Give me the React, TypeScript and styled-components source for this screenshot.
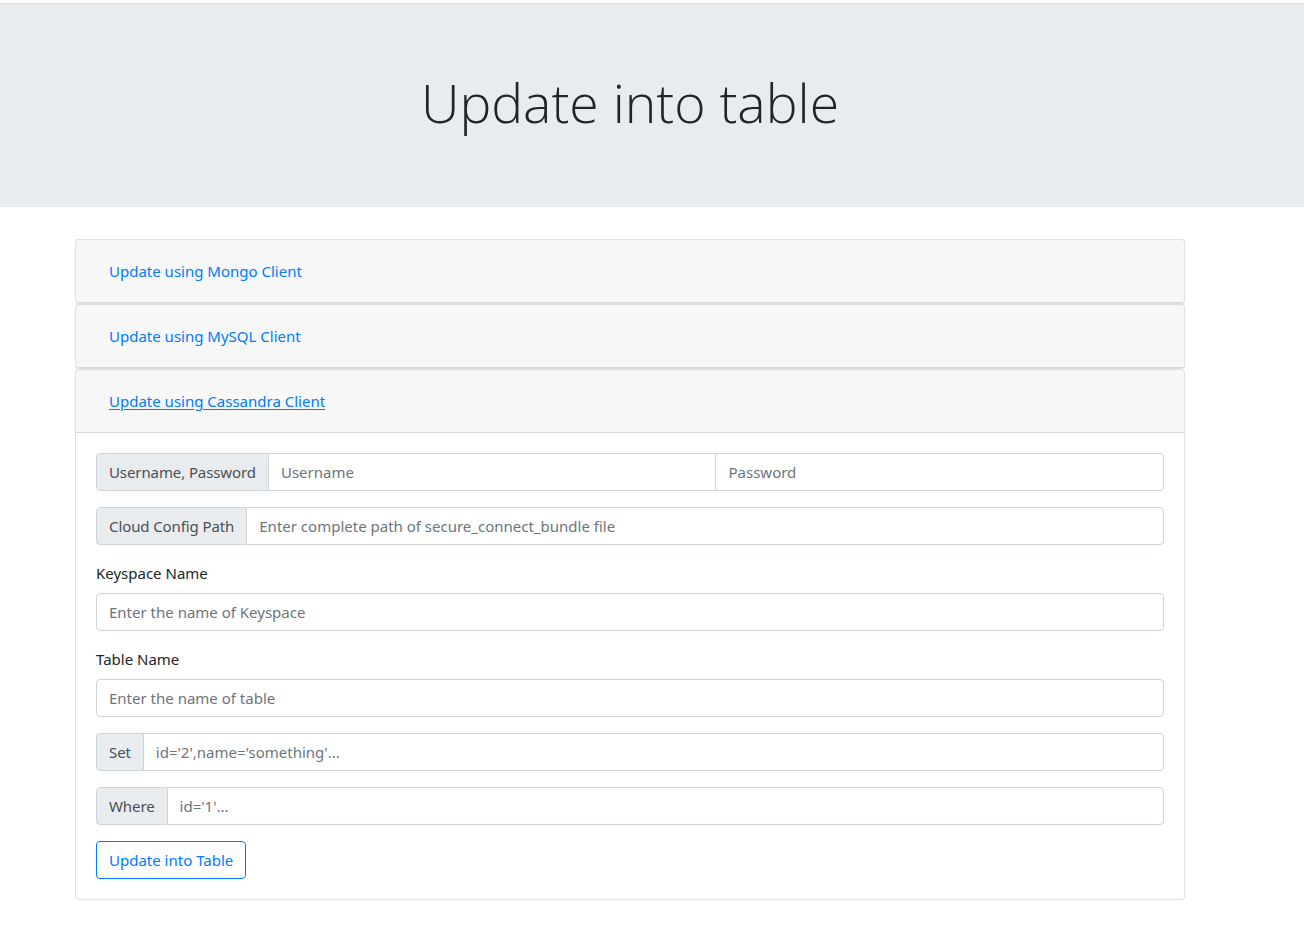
import React from "react";
import styled, { createGlobalStyle } from "styled-components";

const Global = createGlobalStyle`
  html, body { margin: 0; padding: 0; background: #fff; }
  body {
    font-family: "Noto Sans", "Open Sans", "Liberation Sans", sans-serif;
    font-size: 16px;
    line-height: 1.5;
    color: #212529;
  }
  * { box-sizing: border-box; }
  input::placeholder { color: #6c757d; opacity: 1; }
`;

const Page = styled.div`
  padding-top: 3px;
`;

const Jumbotron = styled.header`
  background: #e9ecef;
  border-top: 1px solid #d6d8da;
  padding: 65px 32px 63px;
  margin-bottom: 32px;
  text-align: center;
`;

const Title = styled.h1`
  margin: 0 0 8px;
  padding-right: 44px;
  font-family: "Open Sans", "Noto Sans", sans-serif;
  font-size: 53.5px;
  font-weight: 300;
  line-height: 67px;
  color: #212529;
`;

const Viewport = styled.div`
  width: 1260px;
`;

const Container = styled.main`
  width: 1110px;
  margin: 0 auto;
  padding-bottom: 36px;
`;

const Card = styled.section`
  border: 1px solid rgba(0, 0, 0, 0.125);
  border-radius: 4px;
  background: #fff;
  overflow: hidden;
`;

const CardHeader = styled.div`
  background: rgba(0, 0, 0, 0.03);
  border-bottom: 1px solid rgba(0, 0, 0, 0.125);
  padding: 12px 20px;
`;

const LinkButton = styled.button<{ $active?: boolean }>`
  font: inherit;
  font-size: 15px;
  line-height: 24px;
  background: none;
  border: 1px solid transparent;
  padding: 6px 12px;
  color: #007bff;
  cursor: pointer;
  text-decoration: ${(p) => (p.$active ? "underline" : "none")};
  text-underline-offset: 2px;
`;

const CardBody = styled.div`
  padding: 20px;
`;

const InputGroup = styled.div`
  display: flex;
  margin-bottom: 16px;
`;

const GroupText = styled.span`
  display: flex;
  align-items: center;
  padding: 6px 12px;
  font-size: 15px;
  line-height: 24px;
  letter-spacing: -0.1px;
  color: #495057;
  background: #e9ecef;
  border: 1px solid #ced4da;
  border-radius: 4px 0 0 4px;
  white-space: nowrap;
`;

const Input = styled.input<{ $pos?: "mid" | "last" | "single" }>`
  flex: 1 1 0;
  min-width: 0;
  width: ${(p) => (p.$pos === "single" ? "100%" : "auto")};
  height: 38px;
  padding: 6px 12px;
  font: inherit;
  font-size: 15px;
  color: #495057;
  background: #fff;
  border: 1px solid #ced4da;
  margin-left: ${(p) => (p.$pos === "single" ? "0" : "-1px")};
  border-radius: ${(p) =>
    p.$pos === "single" ? "4px" : p.$pos === "last" ? "0 4px 4px 0" : "0"};
  outline: none;
`;

const FormGroup = styled.div`
  margin-bottom: 16px;
`;

const Label = styled.label`
  display: block;
  margin-bottom: 8px;
  font-size: 15px;
  line-height: 24px;
`;

const OutlineButton = styled.button`
  font: inherit;
  font-size: 15px;
  line-height: 24px;
  padding: 6px 12px;
  color: #007bff;
  background: transparent;
  border: 1px solid #007bff;
  border-radius: 4px;
  cursor: pointer;
`;

export default function App() {
  return (
    <Page>
      <Global />
      <Jumbotron>
        <Title>Update into table</Title>
      </Jumbotron>
      <Viewport>
        <Container>
          <Card>
            <CardHeader>
              <LinkButton>Update using Mongo Client</LinkButton>
            </CardHeader>
          </Card>
          <Card>
            <CardHeader>
              <LinkButton>Update using MySQL Client</LinkButton>
            </CardHeader>
          </Card>
          <Card>
            <CardHeader>
              <LinkButton $active>Update using Cassandra Client</LinkButton>
            </CardHeader>
            <CardBody>
              <InputGroup>
                <GroupText>Username, Password</GroupText>
                <Input $pos="mid" placeholder="Username" />
                <Input $pos="last" placeholder="Password" />
              </InputGroup>
              <InputGroup>
                <GroupText>Cloud Config Path</GroupText>
                <Input $pos="last" placeholder="Enter complete path of secure_connect_bundle file" />
              </InputGroup>
              <FormGroup>
                <Label>Keyspace Name</Label>
                <Input $pos="single" placeholder="Enter the name of Keyspace" />
              </FormGroup>
              <FormGroup>
                <Label>Table Name</Label>
                <Input $pos="single" placeholder="Enter the name of table" />
              </FormGroup>
              <InputGroup>
                <GroupText>Set</GroupText>
                <Input $pos="last" placeholder="id='2',name='something'..." />
              </InputGroup>
              <InputGroup>
                <GroupText>Where</GroupText>
                <Input $pos="last" placeholder="id='1'..." />
              </InputGroup>
              <OutlineButton>Update into Table</OutlineButton>
            </CardBody>
          </Card>
        </Container>
      </Viewport>
    </Page>
  );
}
